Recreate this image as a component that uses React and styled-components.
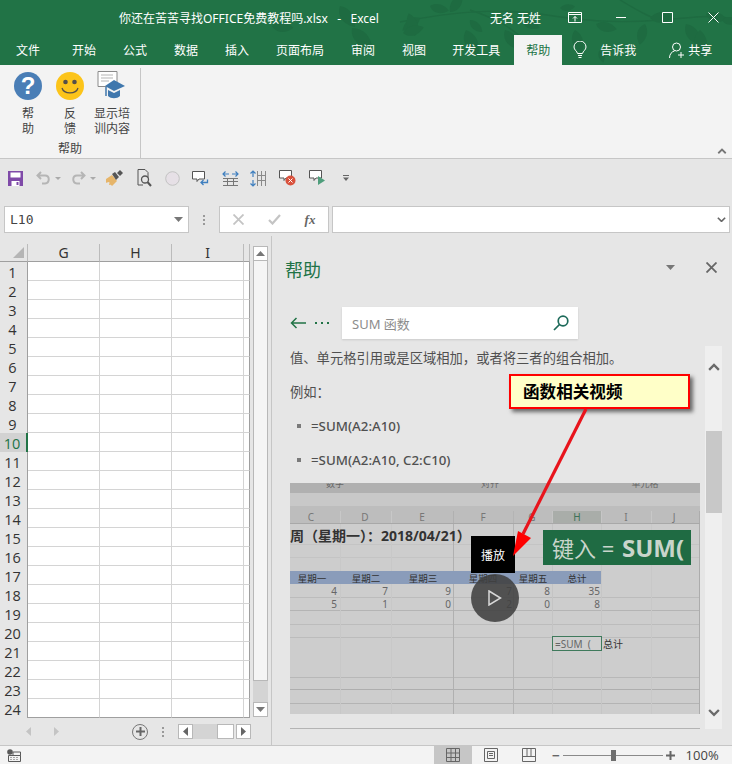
import React from 'react';
import styled, { createGlobalStyle } from 'styled-components';

const CJK = '"Noto Sans", "Noto Sans CJK SC", sans-serif';
const GREEN = '#217346';

const GlobalStyle = createGlobalStyle`
    html, body {
        margin: 0;
        padding: 0;
        background: #e6e6e6;
    }
    * {
        box-sizing: border-box;
    }
`;

const Page = styled.div`
    position: relative;
    width: 732px;
    height: 764px;
    overflow: hidden;
    display: flex;
    flex-direction: column;
    font-family: ${CJK};
    font-size: 12px;
    color: #444;
    background: #e6e6e6;
`;

/* title bar + tabs */
const Head = styled.div`
    position: relative;
    flex: none;
    background: ${GREEN};
    color: #fff;
`;

const LeafLayer = styled.svg`
    position: absolute;
    left: 0;
    top: 0;
`;

const TitleBar = styled.div`
    position: relative;
    height: 35px;
    display: flex;
    align-items: center;
`;

const Title = styled.div`
    flex: none;
    margin-left: 119px;
    width: 371px;
    font-size: 12px;
    white-space: pre;
`;

const UserName = styled.div`
    flex: none;
    width: 62px;
    font-size: 12px;
    white-space: nowrap;
`;

const WindowButton = styled.div`
    flex: none;
    width: 46px;
    display: flex;
    justify-content: center;
`;

const TabBar = styled.div`
    position: relative;
    height: 30px;
    display: flex;
    align-items: stretch;
    gap: 3px;
`;

const Tab = styled.div`
    padding: ${({ $file }) => ($file ? '0 17px 0 16px' : '0 12px')};
    margin-left: ${({ $nudge }) => $nudge || 0}px;
    display: flex;
    align-items: center;
    white-space: nowrap;
    color: ${({ $active }) => ($active ? GREEN : '#fff')};
    background: ${({ $active }) => ($active ? '#f3f3f3' : 'transparent')};
`;

const TellMe = styled.div`
    flex: none;
    margin-left: 8px;
    width: 93px;
    display: flex;
    align-items: center;
    gap: 13px;
`;

const Share = styled.div`
    flex: none;
    display: flex;
    align-items: center;
    gap: 3px;
`;

/* ribbon */
const Ribbon = styled.div`
    position: relative;
    flex: none;
    height: 94px;
    background: #f3f3f3;
    border-bottom: 1px solid #c6c6c6;
    display: flex;
`;

const RibbonGroup = styled.div`
    width: 141px;
    height: 90px;
    margin-top: 3px;
    padding: 2px 0 0 7px;
    border-right: 1px solid #c6c6c6;
    display: flex;
    flex-direction: column;
`;

const RibbonButtons = styled.div`
    display: flex;
`;

const RibbonButton = styled.div`
    width: 42px;
    display: flex;
    flex-direction: column;
    align-items: center;
    line-height: 15px;
    color: #444;
    text-align: center;
`;

const IconSlot = styled.div`
    width: 30px;
    height: 32px;
    margin-bottom: 4px;
    display: flex;
    align-items: center;
    justify-content: center;
`;

const HelpCircle = styled.div`
    width: 28px;
    height: 28px;
    border-radius: 50%;
    background: #4a7eb6;
    color: #fff;
    font-family: "Liberation Sans", sans-serif;
    font-size: 24px;
    font-weight: bold;
    line-height: 28px;
    text-align: center;
`;

const GroupLabel = styled.div`
    width: 126px;
    margin-top: 5px;
    text-align: center;
    line-height: 15px;
`;

const Collapse = styled.svg`
    position: absolute;
    right: 5px;
    bottom: 4px;
`;

/* quick access */
const Qat = styled.div`
    flex: none;
    height: 44px;
    padding-bottom: 6px;
    display: flex;
    align-items: center;
`;

const QatItem = styled.div`
    flex: none;
    width: ${({ $w }) => $w}px;
    display: flex;
    justify-content: center;
`;

/* formula bar */
const FormulaRow = styled.div`
    flex: none;
    height: 33px;
    padding: 3px 2px 3px 4px;
    display: flex;
    align-items: stretch;
`;

const InputBox = styled.div`
    background: #fff;
    border: 1px solid #c6c6c6;
    display: flex;
    align-items: center;
`;

const NameBox = styled(InputBox)`
    width: 185px;
    padding: 0 5px;
    justify-content: space-between;
    font-family: "DejaVu Sans Mono", monospace;
    font-size: 13px;
    color: #444;
`;

const FxBox = styled(InputBox)`
    width: 110px;
    margin-left: 14px;
`;

const FxSlot = styled.div`
    width: 36px;
    display: flex;
    justify-content: center;
    color: #666;
`;

const FxLabel = styled.span`
    font-family: "Liberation Serif", serif;
    font-style: italic;
    font-weight: bold;
    font-size: 13px;
    color: #666;
`;

const FormulaInput = styled(InputBox)`
    flex: 1;
    margin-left: 3px;
    justify-content: flex-end;
    padding-right: 3px;
`;

const Grip = styled.div`
    flex: none;
    align-self: center;
    margin-left: 14px;
    width: 2px;
    height: 10px;
    background-image: linear-gradient(#999 2px, transparent 2px);
    background-size: 2px 4px;
`;

/* workspace */
const Workspace = styled.div`
    position: relative;
    flex: 1;
    display: flex;
    min-height: 0;
`;

const SheetSide = styled.div`
    flex: none;
    width: 272px;
    padding-top: 8px;
    border-right: 1px solid #c6c6c6;
    display: flex;
    flex-direction: column;
`;

const SheetTop = styled.div`
    display: flex;
    align-items: flex-start;
    height: 474px;
`;

const Sheet = styled.div`
    flex: none;
    width: 250px;
    display: grid;
    grid-template-columns: 28px 72px 72px 72px 6px;
    grid-auto-rows: 19px;
    grid-template-rows: 18px;
`;

const Corner = styled.div`
    position: relative;
    border-right: 1px solid #bbb;
    border-bottom: 1px solid #9f9f9f;
`;

const CornerMark = styled.div`
    position: absolute;
    right: 3px;
    bottom: 3px;
    width: 0;
    height: 0;
    border-left: 11px solid transparent;
    border-bottom: 11px solid #b5b5b5;
`;

const ColHead = styled.div`
    border-right: 1px solid #bbb;
    border-bottom: 1px solid #9f9f9f;
    text-align: center;
    font-size: 14px;
    line-height: 18px;
    color: #333;
`;

const RowHead = styled.div`
    border-right: ${({ $active }) => ($active ? `2px solid ${GREEN}` : '1px solid #9f9f9f')};
    background: ${({ $active }) => ($active ? '#d2d2d2' : 'transparent')};
    color: ${({ $active }) => ($active ? GREEN : '#333')};
    text-align: center;
    font-family: "Open Sans", sans-serif;
    font-size: 14.5px;
    line-height: 21px;
    padding-right: 2px;
`;

const Cell = styled.div`
    background: #fff;
    border-right: 1px solid #d4d4d4;
    border-bottom: 1px solid ${({ $last }) => ($last ? '#9f9f9f' : '#d4d4d4')};
`;

const EdgeCell = styled(Cell)`
    border-right: 1px solid #9f9f9f;
`;

const VScroll = styled.div`
    flex: none;
    width: 15px;
    height: 471px;
    margin: 2px 0 0 3px;
    background: #d4d4d4;
    display: flex;
    flex-direction: column;
`;

const VThumb = styled.div`
    flex: none;
    height: 420px;
    background: #f5f5f5;
    border: 1px solid #b8b8b8;
    border-top: 0;
`;

const ScrollButton = styled.div`
    flex: none;
    width: 15px;
    height: 15px;
    margin-top: ${({ $end }) => ($end ? 'auto' : '0')};
    background: #fff;
    border: 1px solid #b8b8b8;
    display: flex;
    align-items: center;
    justify-content: center;
`;

const SheetTabs = styled.div`
    flex: 1;
    display: flex;
    align-items: center;
    padding-left: 26px;
`;

const TabArrow = styled.div`
    flex: none;
    width: 28px;
`;

const AddSheet = styled.div`
    flex: none;
    width: 16px;
    height: 16px;
    margin-left: 50px;
    border: 1.5px solid #777;
    border-radius: 50%;
    display: flex;
    align-items: center;
    justify-content: center;
`;

const HScroll = styled.div`
    flex: none;
    width: 73px;
    margin-left: 14px;
    height: 15px;
    display: flex;
    background: #d4d4d4;
`;

const HTrack = styled.div`
    width: 24px;
`;

const HThumb = styled.div`
    width: 17px;
    background: #fff;
    border: 1px solid #b8b8b8;
`;

const HGap = styled.div`
    width: 2px;
    background: #e6e6e6;
`;

/* help pane */
const Pane = styled.div`
    flex: 1;
    min-width: 0;
    display: flex;
    flex-direction: column;
    padding-left: 18px;
`;

const PaneHead = styled.div`
    height: 71px;
    margin-left: -5px;
    display: flex;
    align-items: flex-start;
    padding-top: 20px;
`;

const PaneTitle = styled.div`
    flex: none;
    font-size: 18px;
    line-height: 28px;
    width: 365px;
    color: ${GREEN};
`;

const PaneTool = styled.div`
    flex: none;
    width: 41px;
    height: 22px;
    display: flex;
    align-items: center;
    justify-content: center;
`;

const SearchRow = styled.div`
    height: 32px;
    display: flex;
    align-items: center;
`;

const BackLink = styled.div`
    width: 52px;
    display: flex;
    align-items: center;
    gap: 9px;
`;

const SearchBox = styled.div`
    width: 236px;
    height: 32px;
    background: #fff;
    padding: 0 9px 0 10px;
    display: flex;
    align-items: center;
    justify-content: space-between;
    font-size: 13px;
    color: #8c8c8c;
    box-shadow: 0 1px 2px rgba(0, 0, 0, 0.12);
`;

const PaneBody = styled.div`
    margin-top: 7px;
    display: flex;
    height: 383px;
`;

const Article = styled.div`
    flex: none;
    width: 410px;
    display: flex;
    flex-direction: column;
    overflow: hidden;
`;

const Para = styled.div`
    height: 20px;
    line-height: 20px;
    margin: 2px 0 12px;
    font-size: 13.3px;
    white-space: nowrap;
    color: #505050;
`;

const ListItem = styled.div`
    height: 20px;
    margin: 2px 0 12px;
    padding-left: 7px;
    display: flex;
    align-items: center;
    gap: 10px;
    font-size: 13.3px;
    font-weight: 500;
    color: #505050;
`;

const Bullet = styled.i`
    width: 4px;
    height: 4px;
    background: #7a7a7a;
`;

const VideoFrame = styled.div`
    position: relative;
    margin-top: 1px;
    width: 410px;
    height: 231px;
    flex: none;
`;

const PlayBadge = styled.div`
    position: absolute;
    left: 181px;
    top: 53px;
    width: 44px;
    height: 37px;
    background: #000;
    color: #fff;
    font-size: 12px;
    display: flex;
    align-items: center;
    justify-content: center;
`;

const PlayCircle = styled.div`
    position: absolute;
    left: 181px;
    top: 91px;
    width: 48px;
    height: 48px;
    border-radius: 50%;
    background: rgba(64, 64, 64, 0.88);
    display: flex;
    align-items: center;
    justify-content: center;
`;

const ArticleRule = styled.div`
    margin-top: 14px;
    flex: none;
    height: 1px;
    background: #b4b4b4;
`;

const PaneScroll = styled.div`
    flex: none;
    width: 17px;
    margin-left: 5px;
    background: #efefef;
    display: flex;
    flex-direction: column;
    align-items: center;
`;

const PaneChevron = styled.div`
    height: ${({ $h }) => $h}px;
    display: flex;
    align-items: center;
    justify-content: center;
`;

const PaneThumb = styled.div`
    margin-top: 43px;
    width: 16px;
    height: 82px;
    background: #c8c8c8;
`;

const PaneScrollFill = styled.div`
    flex: 1;
`;

/* status bar */
const StatusBar = styled.div`
    flex: none;
    height: 19px;
    background: #f3f3f3;
    border-top: 1px solid #c6c6c6;
    display: flex;
    align-items: center;
    padding-left: 7px;
    color: #444;
`;

const ViewButton = styled.div`
    flex: none;
    width: 38px;
    height: 18px;
    display: flex;
    align-items: center;
    justify-content: center;
    margin-left: ${({ $first }) => ($first ? '413px' : '0')};
    background: ${({ $active }) => ($active ? '#c6c6c6' : 'transparent')};
`;

const ZoomSlider = styled.div`
    position: relative;
    flex: none;
    width: 100px;
    height: 1px;
    margin: 0 3px;
    background: #8a8a8a;
`;

const ZoomThumb = styled.div`
    position: absolute;
    left: 48px;
    top: -5px;
    width: 5px;
    height: 11px;
    background: #6e6e6e;
`;

const ZoomMark = styled.div`
    font-family: "Liberation Sans", sans-serif;
    font-weight: bold;
    font-size: 13px;
    line-height: 13px;
    color: #666;
    margin-left: ${({ $left }) => $left || 0}px;
`;

const ZoomValue = styled.div`
    margin-left: 11px;
    font-family: "Open Sans", sans-serif;
    font-size: 13px;
    color: #444;
`;

/* annotation on top of the page */
const Callout = styled.div`
    position: absolute;
    left: 509px;
    top: 374px;
    width: 181px;
    height: 35px;
    padding-left: 12px;
    background: #ffffc8;
    border: 2px solid #f00;
    box-shadow: 3px 3px 4px rgba(0, 0, 0, 0.55);
    font-size: 16.6px;
    font-weight: bold;
    line-height: 31px;
    color: #000;
    font-family: "Noto Sans CJK SC", sans-serif;
`;

const ArrowLayer = styled.svg`
    position: absolute;
    left: 0;
    top: 0;
    pointer-events: none;
`;

const Leaf = ({ x, y, r = 0, s = 1 }) => (
    <path
        transform={`translate(${x} ${y}) rotate(${r}) scale(${s * 1.15})`}
        d="M0 0C4-7 12-8 18-5 14 2 6 5 0 0Z"
    />
);

const LEAVES = [
    [430, 6, 30, 0.9], [450, 12, -40, 1], [420, 18, 160, 1], [470, 20, 60, 0.8],
    [415, 36, -90, 1.1], [403, 33, 0, 1], [466, 30, 80, 1.3], [505, 30, 70, 1.1],
    [522, 20, 40, 0.9], [560, 8, 10, 0.7], [575, 30, 90, 1.1], [596, 24, 30, 1],
    [645, 24, 120, 1], [650, 18, 10, 1.1], [686, 24, 70, 1.2], [700, 30, 100, 1.3],
    [706, 14, 30, 1], [722, 20, 20, 0.8], [340, 6, 70, 1.2], [272, 26, 20, 1],
    [352, 28, 60, 1.3], [365, 42, 160, 0.7], [530, 56, 40, 0.5], [600, 50, 90, 0.6],
];

const HeadLeaves = () => (
    <LeafLayer width="732" height="65" viewBox="0 0 732 65" fill="#1e6b41">
        <path
            d="M400 22C450 12 500 8 540 14S610 24 660 20 720 14 732 20M470 10C500 20 510 28 520 36M620 0C640 12 650 18 672 24"
            fill="none"
            stroke="#1e6b41"
            strokeWidth="1.4"
        />
        {LEAVES.map(([x, y, r, s], index) => (
            <Leaf key={index} x={x} y={y} r={r} s={s} />
        ))}
    </LeafLayer>
);

const RibbonDisplayIcon = () => (
    <svg width="14" height="11" viewBox="0 0 14 11" fill="none" stroke="#fff">
        <path d="M.5.5h13v10H.5zM.5 2.5h13M7 9.5V4.5M5 6.5l2-2 2 2" />
    </svg>
);

const MinimizeIcon = () => (
    <svg width="11" height="11" viewBox="0 0 11 11" stroke="#fff">
        <path d="M0 5.5h10" />
    </svg>
);

const MaximizeIcon = () => (
    <svg width="11" height="11" viewBox="0 0 11 11" fill="none" stroke="#fff">
        <path d="M.5.5h10v10H.5z" />
    </svg>
);

const CloseIcon = ({ color = '#fff', width = 1, size = 11 }) => (
    <svg width={size} height={size} viewBox="0 0 11 11" stroke={color} strokeWidth={width}>
        <path d="M.5.5l10 10M10.5.5l-10 10" />
    </svg>
);

const BulbIcon = () => (
    <svg width="14" height="18" viewBox="0 0 14 18" fill="none" stroke="#fff">
        <path d="M4.5 12.5C4 10 1 9 1 6a6 6 0 0 1 12 0c0 3-3 4-3.500 6.500zM5 14.500h4M5.500 16.500h3" />
    </svg>
);

const UserPlusIcon = () => (
    <svg width="16" height="17" viewBox="0 0 16 17" fill="none" stroke="#fff">
        <circle cx="7.500" cy="5" r="4" />
        <path d="M.5 16c0-4 2.500-6.500 5-7M12 10v6M9 13h6" />
    </svg>
);

const SmileIcon = () => (
    <svg width="28" height="28" viewBox="0 0 28 28">
        <circle cx="14" cy="14" r="14" fill="#fcc41a" />
        <circle cx="9.500" cy="10" r="2.300" fill="#55504a" />
        <circle cx="18.500" cy="10" r="2.300" fill="#55504a" />
        <path d="M6 16c2 6.500 14 6.500 16 0" fill="none" stroke="#55504a" strokeWidth="1.300" />
    </svg>
);

const TrainingIcon = () => (
    <svg width="30" height="30" viewBox="0 0 30 30">
        <path d="M1 .5h19v15H1z" fill="#fff" stroke="#8a8a8a" />
        <path d="M4 4h12M4 7h12M4 10h8" stroke="#b5b5b5" />
        <path d="M8 15l9-6 11 6-11 5z" fill="#3f77ad" />
        <path d="M11 19v6c3 3 9 3 12 0v-6l-6 3z" fill="#3f77ad" />
        <path d="M9 16v9" stroke="#3f77ad" strokeWidth="1.500" />
    </svg>
);

const SaveIcon = () => (
    <svg width="15" height="15" viewBox="0 0 15 15">
        <path d="M0 0h15v15H0z" fill="#7f4aa8" />
        <path d="M2.500 1.500h10v5h-10z" fill="#fff" />
        <path d="M3.500 10h8v5h-8z" fill="#fff" />
        <path d="M8.500 11h2v3h-2z" fill="#7f4aa8" />
    </svg>
);

const UndoIcon = ({ flip }) => (
    <svg width="15" height="14" viewBox="0 0 15 14" fill="none" stroke="#b5b5b5" strokeWidth="2"
        style={flip ? { transform: 'scaleX(-1)' } : undefined}>
        <path d="M5 1L1.500 4.500 5 8M2 4.500h7c5 0 5 7.500 0 8H6" />
    </svg>
);

const Caret = ({ color = '#aaa', w = 6 }) => (
    <svg width={w} height={w / 2} viewBox="0 0 6 3" fill={color}>
        <path d="M0 0h6L3 3z" />
    </svg>
);

const BrushIcon = () => (
    <svg width="17" height="16" viewBox="0 0 17 16">
        <path d="M0 9l6-4 5 6-5 5C5 14 3 15 3 15s1-3 0-3-3 1-3 1z" fill="#e6b56a" />
        <path d="M6 4l3-2 4 5-3 3z" fill="#555" />
        <path d="M11 3l3-3 3 3-3 3z" fill="#555" />
    </svg>
);

const PreviewIcon = () => (
    <svg width="15" height="18" viewBox="0 0 15 18" fill="none" stroke="#555">
        <path d="M1 .5h7l3 3v5M1 .5v15.500h5" />
        <circle cx="8" cy="10.500" r="3.500" strokeWidth="1.300" stroke="#555" />
        <path d="M10.500 13l3.500 4" strokeWidth="2" />
    </svg>
);

const RecordIcon = () => (
    <svg width="15" height="15" viewBox="0 0 15 15">
        <circle cx="7.500" cy="7.500" r="6.800" fill="#e6e0e6" stroke="#c2c2c2" />
    </svg>
);

const Bubble = () => <path d="M.5.500h12v7.500H7l-2 2.500V8H.5z" fill="#fff" stroke="#555" />;

const BubbleReturnIcon = () => (
    <svg width="17" height="15" viewBox="0 0 17 15" fill="none">
        <Bubble />
        <path d="M15.500 8.500v3H9M11.500 9L9 11.500 11.500 14" stroke="#3f7fbf" strokeWidth="1.300" />
    </svg>
);

const BubbleDeleteIcon = () => (
    <svg width="17" height="16" viewBox="0 0 17 16">
        <Bubble />
        <circle cx="11.500" cy="10.500" r="5" fill="#d9513c" />
        <path d="M9.500 8.500l4 4M13.500 8.500l-4 4" stroke="#fff" />
    </svg>
);

const BubblePlayIcon = () => (
    <svg width="17" height="16" viewBox="0 0 17 16">
        <Bubble />
        <path d="M9 6l7 4.500L9 15z" fill="#4f9e7c" />
    </svg>
);

const ColumnWidthIcon = () => (
    <svg width="17" height="15" viewBox="0 0 17 15" fill="none">
        <path d="M1 7.500h15M1 10.500h15M1 14.500h15M5.500 7.500v7M11.500 7.500v7" stroke="#777" />
        <path d="M1 3h6M3.500.5L1 3l2.500 2.500M10 3h6M13.500.5L16 3l-2.500 2.500" stroke="#3f7fbf" strokeWidth="1.200" />
    </svg>
);

const RowHeightIcon = () => (
    <svg width="16" height="17" viewBox="0 0 16 17" fill="none">
        <path d="M7.500 1v15M11.500 1v15M15.500 1v15M7.500 5.500h8M7.500 10.500h8" stroke="#8a8a8a" />
        <path d="M3 1v6M.5 3.500L3 1l2.500 2.500M3 10v6M.5 13.500L3 16l2.500-2.500" stroke="#3f7fbf" strokeWidth="1.200" />
    </svg>
);

const CustomizeIcon = () => (
    <svg width="6" height="6" viewBox="0 0 6 6" fill="#666">
        <path d="M0 0h6v1H0zM0 2.500h6L3 6z" />
    </svg>
);

const CheckMark = () => (
    <svg width="13" height="11" viewBox="0 0 13 11" fill="none" stroke="#c4c4c4" strokeWidth="2.200">
        <path d="M1 6l3.500 3.500L12 1" />
    </svg>
);

const Chevron = ({ up, color = '#6a6a6a', size = 12, width = 2.400 }) => (
    <svg width={size} height={size * 0.65} viewBox="0 0 12 8" fill="none" stroke={color} strokeWidth={width}>
        <path d={up ? 'M1 7l5-5 5 5' : 'M1 1l5 5 5-5'} />
    </svg>
);

const Triangle = ({ dir, color = '#777' }) => {
    const d = { up: 'M0 5L4.500 0 9 5z', down: 'M0 0h9L4.500 5z', left: 'M5 0v9L0 4.500z', right: 'M0 0v9l5-4.500z' }[dir];
    const box = dir === 'up' || dir === 'down' ? [9, 5] : [5, 9];
    return (
        <svg width={box[0]} height={box[1]} viewBox={`0 0 ${box[0]} ${box[1]}`} fill={color}>
            <path d={d} />
        </svg>
    );
};

const BackArrowIcon = () => (
    <svg width="16" height="12" viewBox="0 0 16 12" fill="none" stroke={GREEN} strokeWidth="1.500">
        <path d="M16 6H1.500M6.500 1l-5 5 5 5" />
    </svg>
);

const MoreDots = () => (
    <svg width="14" height="2" viewBox="0 0 14 2" fill={GREEN}>
        <path d="M0 0h2v2H0zM6 0h2v2H6zM12 0h2v2h-2z" />
    </svg>
);

const SearchIcon = () => (
    <svg width="16" height="16" viewBox="0 0 16 16" fill="none" stroke="#1d6a5a" strokeWidth="1.700">
        <circle cx="10" cy="6" r="4.800" />
        <path d="M6.500 9.500L1 15" />
    </svg>
);

const PlusIcon = () => (
    <svg width="9" height="9" viewBox="0 0 9 9" stroke="#666" strokeWidth="2">
        <path d="M4.500 0v9M0 4.500h9" />
    </svg>
);

const MacroIcon = () => (
    <svg width="14" height="13" viewBox="0 0 14 13">
        <circle cx="3" cy="3" r="2.800" fill="#5a5a5a" />
        <path d="M1.500 6.500h12v6h-12zM6 3h7.500v3.500H6z" fill="none" stroke="#5a5a5a" />
        <path d="M3.500 8.500h1M6.500 8.500h1M9.500 8.500h1M3.500 10.500h1M6.500 10.500h1M9.500 10.500h1" stroke="#5a5a5a" />
    </svg>
);

const NormalViewIcon = () => (
    <svg width="14" height="14" viewBox="0 0 14 14" fill="none" stroke="#666">
        <path d="M.5.500h13v13H.5zM.5 5h13M.5 9.500h13M5 .5v13M9.500.5v13" />
    </svg>
);

const LayoutViewIcon = () => (
    <svg width="14" height="14" viewBox="0 0 14 14" fill="none" stroke="#666">
        <path d="M.5.500h13v13H.5zM3.500 3.500h7v7h-7zM5 5.500h4M5 7.500h4" />
    </svg>
);

const BreakViewIcon = () => (
    <svg width="14" height="14" viewBox="0 0 14 14" fill="none" stroke="#666">
        <path d="M.5.500h13v13H.5zM.5 8.500h13M5 .5v8M9 .5v8" />
    </svg>
);

const HLINES = [[544, '#c4c4c4'], [557, '#c4c4c4'], [597, '#bcbcbc'], [610, '#b4b4b4'], [624, '#bcbcbc'], [637, '#bcbcbc'], [677, '#b8b8b8'], [689, '#aeaeae'], [703, '#b4b4b4']];
const VLINES = [[340, '#c8c8c8'], [391, '#c8c8c8'], [453, '#b0b0b0'], [513, '#b4b4b4'], [552, '#c4c4c4'], [601, '#c6c6c6'], [651, '#c8c8c8'], [699, '#acacac']];
const COL_HEADS = [['C', 311], ['D', 365], ['E', 422], ['F', 483], ['G', 532], ['H', 577], ['I', 626], ['J', 674]];
const WEEK = [['星期一', 312], ['星期二', 366], ['星期三', 423], ['星期四', 483], ['星期五', 533], ['总计', 577]];
const FIGURES = [
    [['4', 337], ['7', 388], ['9', 451], ['7', 512], ['8', 550], ['35', 600]],
    [['5', 337], ['1', 388], ['0', 451], ['2', 512], ['0', 550], ['8', 600]],
];

// still frame of the video, drawn in page coordinates
const VideoFrameArt = () => (
    <svg width="410" height="231" viewBox="290 483 410 231" fontFamily={CJK}>
        <rect x="290" y="483" width="410" height="231" fill="#cdcdcd" />
        <rect x="290" y="483" width="410" height="10" fill="#b0b0b0" />
        <rect x="290" y="493" width="410" height="13" fill="#c8c8c8" />
        <rect x="290" y="506" width="410" height="17" fill="#bdbdbd" />
        <rect x="552" y="511" width="49" height="12" fill="#a9ada9" />
        <text x="335" y="487" fontSize="9" fill="#666" textAnchor="middle">数字</text>
        <text x="490" y="487" fontSize="9" fill="#666" textAnchor="middle">对齐</text>
        <text x="645" y="487" fontSize="9" fill="#666" textAnchor="middle">单元格</text>
        {HLINES.map(([y, color]) => (
            <rect key={y} x="290" y={y} width="410" height="1" fill={color} />
        ))}
        {VLINES.map(([x, color]) => (
            <rect key={x} x={x} y="511" width="1" height="203" fill={color} />
        ))}
        <rect x="290" y="523" width="410" height="1" fill="#a8a8a8" />
        {COL_HEADS.map(([label, x]) => (
            <text key={label} x={x} y="521" fontSize="10" fill={label === 'H' ? '#3d7358' : '#777'} textAnchor="middle">{label}</text>
        ))}
        <text x="290" y="541" fontSize="14" fontWeight="bold" fill="#333">周（星期一）：2018/04/21）</text>
        <rect x="290" y="571" width="311" height="13" fill="#8a9cba" />
        {WEEK.map(([label, x]) => (
            <text key={label} x={x} y="582" fontSize="9.500" fill="#333" textAnchor="middle">{label}</text>
        ))}
        {FIGURES.map((row, r) => row.map(([value, x]) => (
            <text key={`${r}${x}`} x={x} y={595 + r * 13} fontSize="10" fill="#666" textAnchor="end">{value}</text>
        )))}
        <rect x="543" y="530" width="148" height="35" fill="#1f6b43" />
        <text x="552" y="557" fontSize="22" fill="#c9d5cb">键入 =</text>
        <text x="622" y="557" fontSize="24" fontWeight="bold" fill="#c9d5cb">SUM(</text>
        <rect x="552.500" y="636.500" width="49" height="14" fill="#cfcfcf" stroke="#3f7a5c" />
        <text x="555" y="648" fontSize="10" fill="#666" xmlSpace="preserve">=SUM  (</text>
        <text x="603" y="648" fontSize="10" fill="#333">总计</text>
    </svg>
);

const rows = Array.from({ length: 24 }, (_, index) => index + 1);
const columns = ['G', 'H', 'I'];
const tabs = ['开始', '公式', '数据', '插入', '页面布局', '审阅', '视图'];

const QAT_ITEMS = [
    [30, <SaveIcon key="s" />], [2, null], [22, <UndoIcon key="u" />], [8, <Caret key="c1" />],
    [4, null], [24, <UndoIcon key="r" flip />], [6, <Caret key="c2" />], [36, <BrushIcon key="b" />],
    [24, <PreviewIcon key="p" />], [32, <RecordIcon key="o" />], [24, <BubbleReturnIcon key="br" />],
    [36, <ColumnWidthIcon key="cw" />], [20, <RowHeightIcon key="rh" />], [38, <BubbleDeleteIcon key="bd" />],
    [22, <BubblePlayIcon key="bp" />], [36, <CustomizeIcon key="m" />],
];

const App = () => (
    <Page>
        <GlobalStyle />
        <Head>
            <HeadLeaves />
            <TitleBar>
                <Title>你还在苦苦寻找OFFICE免费教程吗.xlsx   -   Excel</Title>
                <UserName>无名 无姓</UserName>
                <WindowButton><RibbonDisplayIcon /></WindowButton>
                <WindowButton><MinimizeIcon /></WindowButton>
                <WindowButton><MaximizeIcon /></WindowButton>
                <WindowButton><CloseIcon /></WindowButton>
            </TitleBar>
            <TabBar>
                <Tab $file>文件</Tab>
                {tabs.map((tab) => <Tab key={tab}>{tab}</Tab>)}
                <Tab $nudge={-1}>开发工具</Tab>
                <Tab $active $nudge={-1}>帮助</Tab>
                <TellMe><BulbIcon />告诉我</TellMe>
                <Share><UserPlusIcon />共享</Share>
            </TabBar>
        </Head>
        <Ribbon>
            <RibbonGroup>
                <RibbonButtons>
                    <RibbonButton>
                        <IconSlot><HelpCircle>?</HelpCircle></IconSlot>
                        帮<br />助
                    </RibbonButton>
                    <RibbonButton>
                        <IconSlot><SmileIcon /></IconSlot>
                        反<br />馈
                    </RibbonButton>
                    <RibbonButton>
                        <IconSlot><TrainingIcon /></IconSlot>
                        显示培<br />训内容
                    </RibbonButton>
                </RibbonButtons>
                <GroupLabel>帮助</GroupLabel>
            </RibbonGroup>
            <Collapse width="10" height="6" viewBox="0 0 12 8" fill="none" stroke="#777" strokeWidth="2.400">
                <path d="M1 7l5-5 5 5" />
            </Collapse>
        </Ribbon>
        <Qat>
            {QAT_ITEMS.map(([w, icon], index) => <QatItem key={index} $w={w}>{icon}</QatItem>)}
        </Qat>
        <FormulaRow>
            <NameBox>
                L10
                <Triangle dir="down" color="#777" />
            </NameBox>
            <Grip />
            <FxBox>
                <FxSlot><CloseIcon color="#c4c4c4" width={1.800} /></FxSlot>
                <FxSlot><CheckMark /></FxSlot>
                <FxSlot><FxLabel>fx</FxLabel></FxSlot>
            </FxBox>
            <FormulaInput><Chevron color="#666" size={9} width={2.200} /></FormulaInput>
        </FormulaRow>
        <Workspace>
            <SheetSide>
                <SheetTop>
                    <Sheet>
                        <Corner><CornerMark /></Corner>
                        {columns.map((column) => <ColHead key={column}>{column}</ColHead>)}
                        <ColHead />
                        {rows.map((row) => (
                            <React.Fragment key={row}>
                                <RowHead $active={row === 10}>{row}</RowHead>
                                <Cell $last={row === 24} />
                                <Cell $last={row === 24} />
                                <Cell $last={row === 24} />
                                <EdgeCell $last={row === 24} />
                            </React.Fragment>
                        ))}
                    </Sheet>
                    <VScroll>
                        <ScrollButton><Triangle dir="up" /></ScrollButton>
                        <VThumb />
                        <ScrollButton $end><Triangle dir="down" /></ScrollButton>
                    </VScroll>
                </SheetTop>
                <SheetTabs>
                    <TabArrow><Triangle dir="left" color="#c4c4c4" /></TabArrow>
                    <TabArrow><Triangle dir="right" color="#c4c4c4" /></TabArrow>
                    <AddSheet><PlusIcon /></AddSheet>
                    <Grip />
                    <HScroll>
                        <ScrollButton><Triangle dir="left" color="#666" /></ScrollButton>
                        <HTrack />
                        <HThumb />
                        <HGap />
                        <ScrollButton><Triangle dir="right" color="#666" /></ScrollButton>
                    </HScroll>
                </SheetTabs>
            </SheetSide>
            <Pane>
                <PaneHead>
                    <PaneTitle>帮助</PaneTitle>
                    <PaneTool><Triangle dir="down" color="#777" /></PaneTool>
                    <PaneTool><CloseIcon color="#666" width={1.800} /></PaneTool>
                </PaneHead>
                <SearchRow>
                    <BackLink><BackArrowIcon /><MoreDots /></BackLink>
                    <SearchBox>SUM 函数<SearchIcon /></SearchBox>
                </SearchRow>
                <PaneBody>
                    <Article>
                        <Para>值、单元格引用或是区域相加，或者将三者的组合相加。</Para>
                        <Para>例如：</Para>
                        <ListItem><Bullet />=SUM(A2:A10)</ListItem>
                        <ListItem><Bullet />=SUM(A2:A10, C2:C10)</ListItem>
                        <VideoFrame>
                            <VideoFrameArt />
                            <PlayBadge>播放</PlayBadge>
                            <PlayCircle>
                                <svg width="14" height="16" viewBox="0 0 14 16" fill="none" stroke="#d8d8d8" strokeWidth="1.500">
                                    <path d="M1 1l11.500 7L1 15z" />
                                </svg>
                            </PlayCircle>
                        </VideoFrame>
                        <ArticleRule />
                    </Article>
                    <PaneScroll>
                        <PaneChevron $h={42}><Chevron up /></PaneChevron>
                        <PaneThumb />
                        <PaneScrollFill />
                        <PaneChevron $h={32}><Chevron /></PaneChevron>
                    </PaneScroll>
                </PaneBody>
            </Pane>
        </Workspace>
        <StatusBar>
            <MacroIcon />
            <ViewButton $active $first><NormalViewIcon /></ViewButton>
            <ViewButton><LayoutViewIcon /></ViewButton>
            <ViewButton><BreakViewIcon /></ViewButton>
            <ZoomMark $left={4}>−</ZoomMark>
            <ZoomSlider><ZoomThumb /></ZoomSlider>
            <PlusIcon />
            <ZoomValue>100%</ZoomValue>
        </StatusBar>
        <Callout>函数相关视频</Callout>
        <ArrowLayer width="732" height="764" viewBox="0 0 732 764">
            <path d="M586 409L523 534" stroke="#e8141c" strokeWidth="3.200" />
            <path d="M513 556L518 531 531 538z" fill="#f00" />
        </ArrowLayer>
    </Page>
);

export default App;
